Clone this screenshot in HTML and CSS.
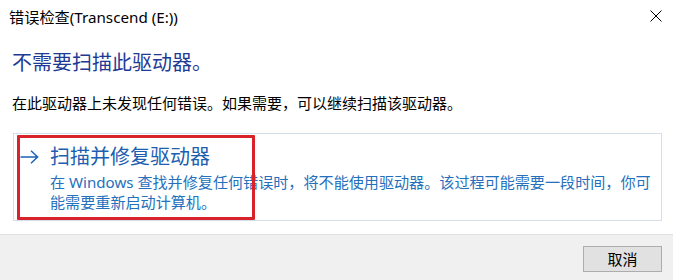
FILE: index.html
```html
<!DOCTYPE html>
<html lang="zh-CN">
<head>
<meta charset="utf-8">
<title>错误检查</title>
<link rel="stylesheet" href="styles.css">
</head>
<body>
<div class="window">
  <div class="titlebar">
    <span class="title">错误检查(Transcend (E:))</span>
    <svg class="close" width="12" height="12" viewBox="0 0 12 12"><path d="M0.5 0.5 L11.5 11.5 M11.5 0.5 L0.5 11.5" stroke="#000" stroke-width="1" fill="none"/></svg>
  </div>
  <div class="content">
    <div class="heading">不需要扫描此驱动器。</div>
    <div class="message">在此驱动器上未发现任何错误。如果需要，可以继续扫描该驱动器。</div>
    <div class="card">
      <div class="cmd">
        <svg class="arrow" width="19" height="14" viewBox="0 0 19 14"><path d="M0.5 7 H17.5 M11 0.8 L17.6 7 L11 13.2" stroke="#1c63b5" stroke-width="1.5" fill="none"/></svg>
        <div class="cmd-text">
          <div class="cmd-title">扫描并修复驱动器</div>
          <div class="cmd-desc">在 Windows 查找并修复任何错误时，将不能使用驱动器。该过程可能需要一段时间，你可<br>能需要重新启动计算机。</div>
        </div>
      </div>
      <div class="highlight"></div>
    </div>
  </div>
  <div class="footer">
    <button class="btn">取消</button>
  </div>
</div>
</body>
</html>
```
FILE: styles.css
```css
html, body {
  margin: 0;
  padding: 0;
  background: #fff;
}
body {
  font-family: "Noto Sans", "Noto Sans CJK SC", sans-serif;
  color: #000;
}
.window {
  width: 673px;
  height: 280px;
  display: flex;
  flex-direction: column;
  overflow: hidden;
}
.titlebar {
  height: 34px;
  display: flex;
  align-items: center;
  justify-content: space-between;
  padding: 0 11px 0 9px;
  box-sizing: border-box;
}
.title {
  font-size: 15.2px;
  line-height: 20px;
  margin-top: -1px;
}
.close {
  display: block;
  margin-top: -2px;
}
.content {
  padding: 0 11px 0 12px;
  flex: 1;
}
.heading {
  margin-top: 16px;
  font-size: 20px;
  line-height: 26px;
  color: #1e3a94;
}
.message {
  margin-top: 17px;
  font-size: 15px;
  line-height: 20px;
  color: #000;
}
.card {
  position: relative;
  margin-top: 20px;
  margin-left: 1px;
  height: 88px;
  box-sizing: border-box;
  border: 1px solid #d3dfe9;
  padding: 10px 6px 0 6px;
}
.cmd {
  display: flex;
  align-items: flex-start;
}
.arrow {
  display: block;
  margin-top: 6px;
  margin-right: 11px;
  flex: none;
}
.cmd-title {
  font-size: 20px;
  line-height: 26px;
  color: #1c5eb0;
}
.cmd-desc {
  margin-top: 2px;
  font-size: 15.1px;
  line-height: 20px;
  color: #2470bd;
  white-space: nowrap;
}
.highlight {
  position: absolute;
  left: 3px;
  top: 1px;
  width: 238px;
  height: 85px;
  box-sizing: border-box;
  border: 3px solid #d8232a;
  border-radius: 1px;
}
.footer {
  height: 46px;
  box-sizing: border-box;
  border-top: 1px solid #dfdfdf;
  background: #f0f0f0;
  display: flex;
  justify-content: flex-end;
  align-items: flex-start;
  padding: 11px 11px 0 0;
}
.btn {
  width: 79px;
  height: 26px;
  background: #e1e1e1;
  border: 1px solid #adadad;
  font-family: "Noto Sans CJK SC", sans-serif;
  font-size: 15px;
  line-height: 20px;
  color: #000;
  padding: 0;
}
```
